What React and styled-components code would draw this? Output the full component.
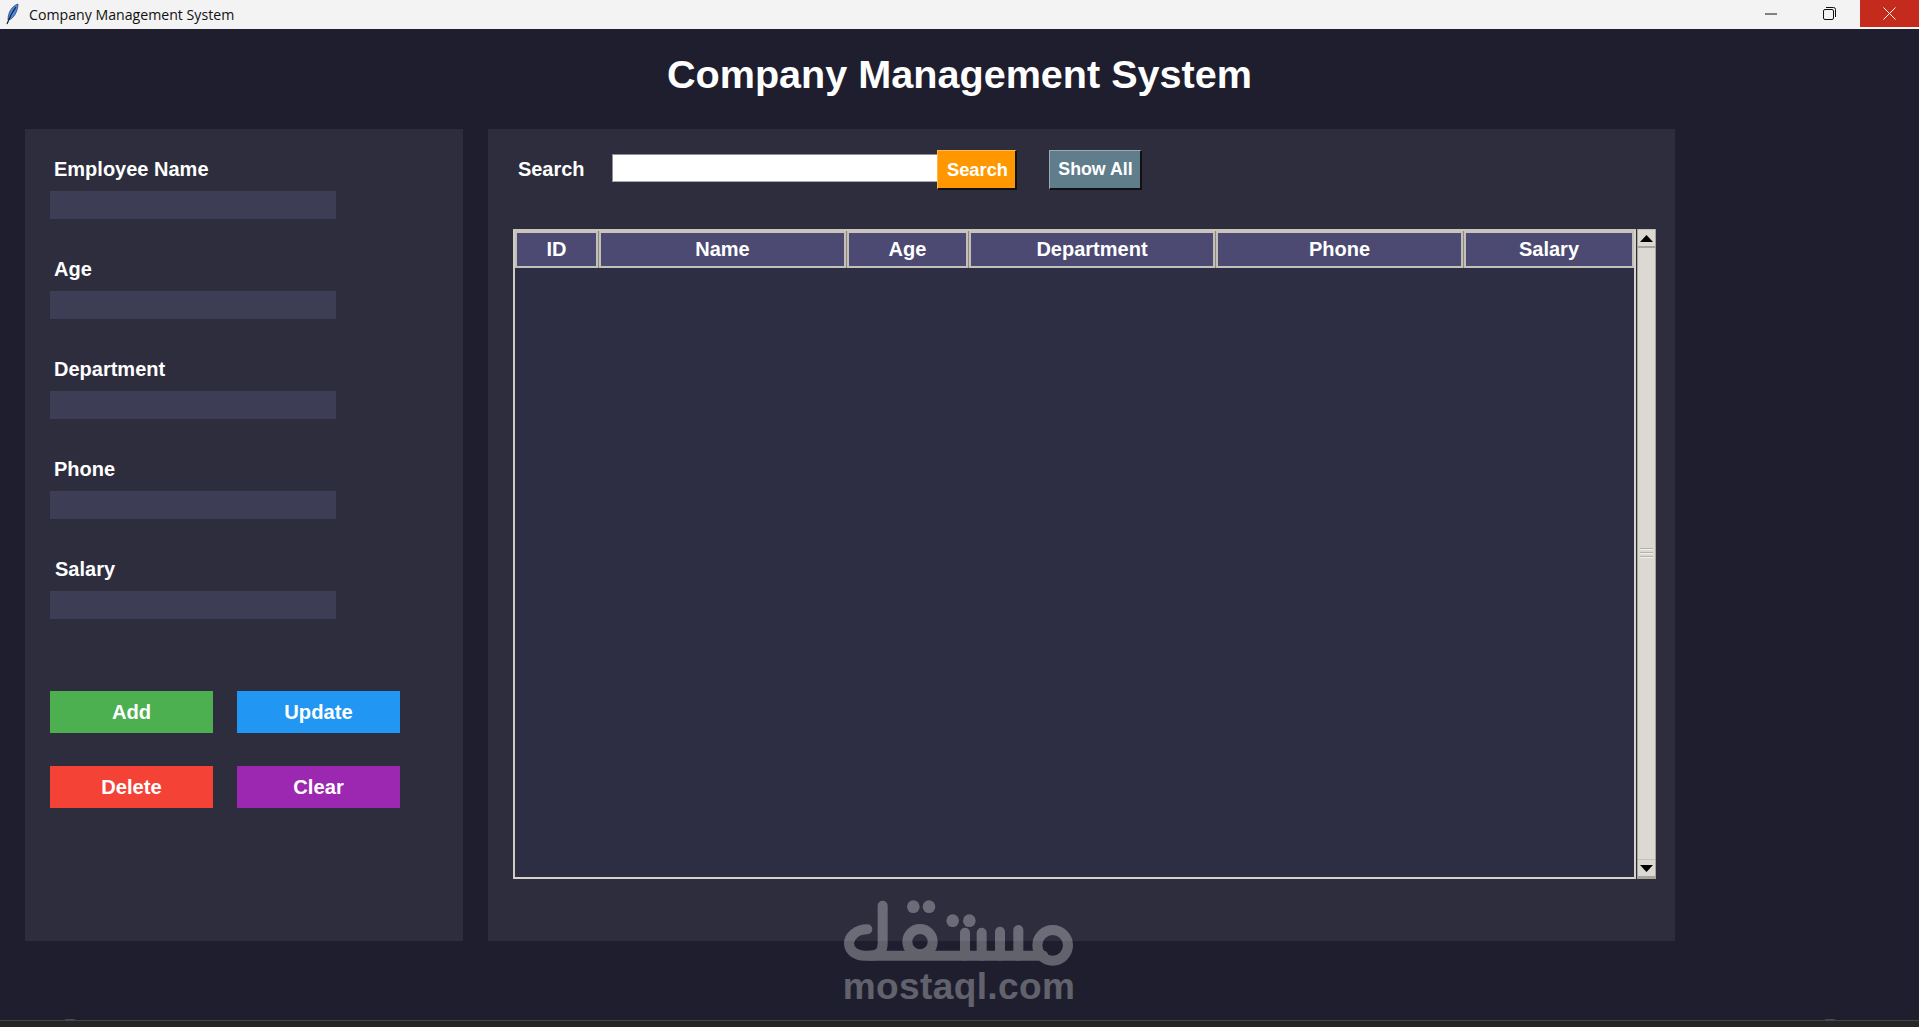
import React from "react";
import styled, { createGlobalStyle } from "styled-components";

const Global = createGlobalStyle`
  html, body { margin: 0; padding: 0; background: #1e1e2e; }
  * { box-sizing: border-box; }
  #root { height: 1027px; overflow: hidden; }
`;
const Page = styled.div`
  position: relative; width: 1919px; height: 1027px; display: flex; flex-direction: column;
  background: #1e1e2e; color: #fff; font-family: "Liberation Sans", Arial, sans-serif; overflow: hidden;
`;
const TitleBar = styled.header`
  flex: 0 0 29px; display: flex; align-items: flex-start; background: #f3f3f3; color: #111;
`;
const AppIcon = styled.svg`width: 20px; height: 22px; margin: 3px 0 0 3px; flex: none;`;
const WindowTitle = styled.span`
  font-family: "Open Sans", "Noto Sans", sans-serif; font-size: 14.15px; line-height: 29px; margin-left: 6px; flex: 1;
`;
const WinButton = styled.button`
  width: ${p => p.$close ? 59 : 58}px; height: 27px; padding: ${p => p.$close ? 0 : "0 4px 0 0"}; border: 0;
  background: ${p => p.$close ? "#c42b1c" : "transparent"};
  display: flex; align-items: center; justify-content: center;
`;
const Heading = styled.h1`
  flex: 0 0 100px; margin: 0; padding-top: 26px; text-align: center; font-size: 39.6px; line-height: 39px; font-weight: 700;
`;
const Columns = styled.main`
  flex: 0 0 812px; display: flex; gap: 25px; padding-left: 25px;
`;
const SidePanel = styled.section`
  width: 438px; background: #2d2d3e; padding: 25px 25px 0;
`;
const Field = styled.div`
  display: flex; flex-direction: column; margin-bottom: 35px;
`;
const FieldLabel = styled.label`
  height: 30px; line-height: 30px; margin: 0 0 7px ${p => p.$indent || 4}px; font-size: 20px; font-weight: 700;
`;
const FieldInput = styled.div`
  width: 286px; height: 28px; background: #3d3d56;
`;
const Actions = styled.div`
  display: grid; grid-template-columns: 163px 163px; grid-auto-rows: 42px; column-gap: 24px; row-gap: 33px; margin-top: 72px;
`;
const ActionButton = styled.button`
  border: 0; padding: 0; background: ${p => p.$bg}; color: #fff; font: 700 20.2px "Liberation Sans", Arial, sans-serif;
`;
const MainPanel = styled.section`
  width: 1187px; background: #2d2d3e; padding: 21px 0 0 25px;
`;
const SearchRow = styled.div`
  height: 40px; display: flex; align-items: flex-start; margin-bottom: 39px;
`;
const SearchLabel = styled.label`
  width: 99px; padding-left: 5px; font-size: 20px; line-height: 38px; font-weight: 700; letter-spacing: -0.05px;
`;
const SearchInput = styled.div`
  width: 325px; height: 28px; margin-top: 4px; background: #fff; border: 1px solid #8f8f8f; border-right: 0; border-bottom-color: #aaa;
`;
const ReliefButton = styled.button`
  height: 40px; width: ${p => p.$w}px; margin-left: ${p => p.$ml || 0}px; padding: 0 0 0 ${p => p.$pl || 0}px;
  background: ${p => p.$bg}; color: #fff; font: 700 ${p => p.$size}px "Liberation Sans", Arial, sans-serif;
  border-style: solid; border-width: 1px 2px 2px 1px;
  border-color: ${p => p.$light} #111 #111 ${p => p.$light};
`;
const TableWrap = styled.div`
  display: flex; gap: 1px; height: 650px;
`;
const Tree = styled.div`
  flex: none; width: 1123px; background: #2d2d44; border: 2px solid #d6d3cc; border-top-color: #c9c5bc; border-left-color: #cfccc4;
`;
const HeadRow = styled.div`
  display: grid; grid-template-columns: 83px 247px 121px 246px 247px 170px; gap: 1px; height: 37px; background: #8b877f;
`;
const HeadCell = styled.div`
  background: #4c4a72; border: 2px solid #c4c0b7; border-top-color: #c9c5bc; display: flex; align-items: center; justify-content: center;
  font-size: 20px; font-weight: 700;
`;
const Scrollbar = styled.div`
  flex: none; width: 19px; display: flex; flex-direction: column; background: #dcd9d3; border-left: 1px solid #a8a49c; border-right: 1px solid #a8a49c; border-bottom: 1px solid #a8a49c;
`;
const ScrollArrow = styled.div`
  flex: 0 0 19px; display: flex; align-items: center; justify-content: center; background: #dcd9d3;
  border-top: 1px solid #c4c0b7; border-bottom: 2px solid #a8a49c;
`;
const ScrollThumb = styled.div`
  flex: 1; display: flex; align-items: center; justify-content: center; flex-direction: column; gap: 2px; padding-bottom: 2px;
`;
const Grip = styled.i`
  display: block; width: 13px; height: 2px; background: #b5b2aa; border-bottom: 1px solid #f0efec;
`;
const BottomStrip = styled.footer`
  position: absolute; left: 0; right: 0; bottom: 0; height: 7px; background: #262626; border-top: 1px solid #454545;
`;
const StripTab = styled.span`
  position: absolute; top: -2px; left: ${p => p.$x}px; width: 10px; height: 2px; background: #44465a;
`;
const Watermark = styled.div`
  position: absolute; left: 830px; top: 890px; width: 260px; opacity: .3; color: #fff;
  display: flex; flex-direction: column; align-items: center;
`;
const MarkLogo = styled.svg`display: block; width: 260px; height: 81px; flex: none;`;
const MarkText = styled.div`
  font-size: 37px; line-height: 32px; font-weight: 700; letter-spacing: 0.4px; white-space: nowrap; margin-left: -2px;
`;

const fields = [["Employee Name", 4], ["Age", 4], ["Department", 4], ["Phone", 4], ["Salary", 5]];
const cols = ["ID", "Name", "Age", "Department", "Phone", "Salary"];
const actions = [["Add", "#4caf50"], ["Update", "#2196f3"], ["Delete", "#f44336"], ["Clear", "#9c27b0"]];

export default function App() {
  return (
    <Page>
      <Global />
      <TitleBar>
        <AppIcon viewBox="0 0 20 22">
          <path d="M15 1C9 3 5 9 5 17l3-1c4-3 7-9 7-15z" fill="#4a8ae0" stroke="#33466b" strokeWidth=".8" />
          <path d="M13 4C10 8 7 13 4 21" fill="none" stroke="#14233f" strokeWidth="1.2" />
        </AppIcon>
        <WindowTitle>Company Management System</WindowTitle>
        <WinButton aria-label="Minimize">
          <svg width="12" height="2" viewBox="0 0 12 2"><path d="M0 1h12" stroke="#111" strokeWidth="1" /></svg>
        </WinButton>
        <WinButton aria-label="Restore">
          <svg width="13" height="13" viewBox="0 0 13 13" fill="none" stroke="#111" strokeWidth="1">
            <rect x=".5" y="2.5" width="10" height="10" rx="1.5" />
            <path d="M3 .5h7.5a2 2 0 0 1 2 2V10" />
          </svg>
        </WinButton>
        <WinButton $close aria-label="Close">
          <svg width="13" height="13" viewBox="0 0 13 13"><path d="M.5.5l12 12M12.5.5l-12 12" stroke="#fff" strokeWidth="1" /></svg>
        </WinButton>
      </TitleBar>
      <Heading>Company Management System</Heading>
      <Columns>
        <SidePanel>
          {fields.map(([f, i]) => (
            <Field key={f}>
              <FieldLabel $indent={i}>{f}</FieldLabel>
              <FieldInput />
            </Field>
          ))}
          <Actions>
            {actions.map(([a, c]) => <ActionButton key={a} $bg={c}>{a}</ActionButton>)}
          </Actions>
        </SidePanel>
        <MainPanel>
          <SearchRow>
            <SearchLabel>Search</SearchLabel>
            <SearchInput />
            <ReliefButton $w={80} $size={18.3} $pl={2} $bg="#ff9800" $light="#ffb84d">Search</ReliefButton>
            <ReliefButton $w={93} $size={17.8} $pl={1} $ml={32} $bg="#607d8b" $light="#9aaab3">Show All</ReliefButton>
          </SearchRow>
          <TableWrap>
            <Tree>
              <HeadRow>
                {cols.map(c => <HeadCell key={c}>{c}</HeadCell>)}
              </HeadRow>
            </Tree>
            <Scrollbar>
              <ScrollArrow>
                <svg width="13" height="7" viewBox="0 0 13 7"><path d="M6.5 0L13 7H0z" fill="#000" /></svg>
              </ScrollArrow>
              <ScrollThumb><Grip /><Grip /><Grip /></ScrollThumb>
              <ScrollArrow>
                <svg width="13" height="7" viewBox="0 0 13 7"><path d="M0 0h13L6.5 7z" fill="#000" /></svg>
              </ScrollArrow>
            </Scrollbar>
          </TableWrap>
        </MainPanel>
      </Columns>
      <Watermark>
        <MarkLogo viewBox="0 0 780 243">
          <g fill="none" stroke="#fff" strokeWidth="30" strokeLinecap="round" strokeLinejoin="round">
            <path d="M112 118C78 118 57 140 57 160C57 183 78 197 105 197H640" />
            <path d="M158 47V160Q158 197 120 197" />
            <circle cx="270" cy="155" r="38" />
            <path d="M405 128V197M455 128V197M510 125V197M565 120V197" />
            <circle cx="668" cy="166" r="46" />
          </g>
          <g fill="#fff">
            <circle cx="250" cy="50" r="19" />
            <circle cx="297" cy="50" r="19" />
            <circle cx="368" cy="92" r="19" />
            <circle cx="418" cy="92" r="19" />
          </g>
        </MarkLogo>
        <MarkText>mostaql.com</MarkText>
      </Watermark>
      <BottomStrip>
        <StripTab $x={65} />
        <StripTab $x={1825} />
      </BottomStrip>
    </Page>
  );
}
